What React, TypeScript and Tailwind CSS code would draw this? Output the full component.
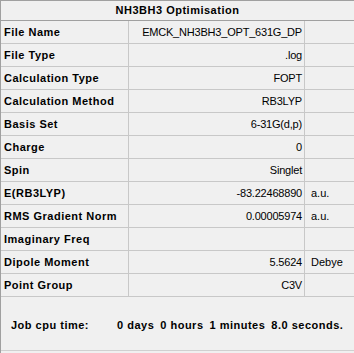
import React from "react";

type Row = { label: string; value: string; unit?: string };

const rows: Row[] = [
  { label: "File Name", value: "EMCK_NH3BH3_OPT_631G_DP" },
  { label: "File Type", value: ".log" },
  { label: "Calculation Type", value: "FOPT" },
  { label: "Calculation Method", value: "RB3LYP" },
  { label: "Basis Set", value: "6-31G(d,p)" },
  { label: "Charge", value: "0" },
  { label: "Spin", value: "Singlet" },
  { label: "E(RB3LYP)", value: "-83.22468890", unit: "a.u." },
  { label: "RMS Gradient Norm", value: "0.00005974", unit: "a.u." },
  { label: "Imaginary Freq", value: "" },
  { label: "Dipole Moment", value: "5.5624", unit: "Debye" },
  { label: "Point Group", value: "C3V" },
];

const font = { fontFamily: '"Liberation Sans", Arial, sans-serif' };

export default function App() {
  return (
    <div
      className="w-[354px] h-[353px] bg-[#f0f0f0] text-black text-[11px] leading-none border-l border-t border-[#a0a0a0] flex flex-col overflow-hidden"
      style={font}
    >
      <div className="h-[20px] shrink-0 border-b border-[#a0a0a0] flex items-center justify-center font-bold tracking-[0.5px]">
        NH3BH3 Optimisation
      </div>
      {rows.map((r) => (
        <div key={r.label} className="h-[23px] shrink-0 flex border-b border-[#c8c8c8]">
          <div className="w-[128px] shrink-0 border-r border-[#c8c8c8] flex items-center pl-[3px] font-bold tracking-[0.5px] whitespace-nowrap">
            {r.label}
          </div>
          <div className="w-[176px] shrink-0 border-r border-[#c8c8c8] flex items-center justify-end pr-[2px] tracking-[-0.2px] whitespace-nowrap">
            {r.value}
          </div>
          <div className="flex-1 flex items-center pl-[6px] whitespace-nowrap">{r.unit ?? ""}</div>
        </div>
      ))}
      <div className="h-[54px] shrink-0 border-b border-[#d0d0d0] flex items-center pt-[3px] font-bold tracking-[0.5px] whitespace-nowrap">
        <span className="ml-[10px]">Job cpu time:</span>
        <span className="ml-[28px]">0 days</span>
        <span className="ml-[6px]">0 hours</span>
        <span className="ml-[6px]">1 minutes</span>
        <span className="ml-[6px]">8.0 seconds.</span>
      </div>
    </div>
  );
}
